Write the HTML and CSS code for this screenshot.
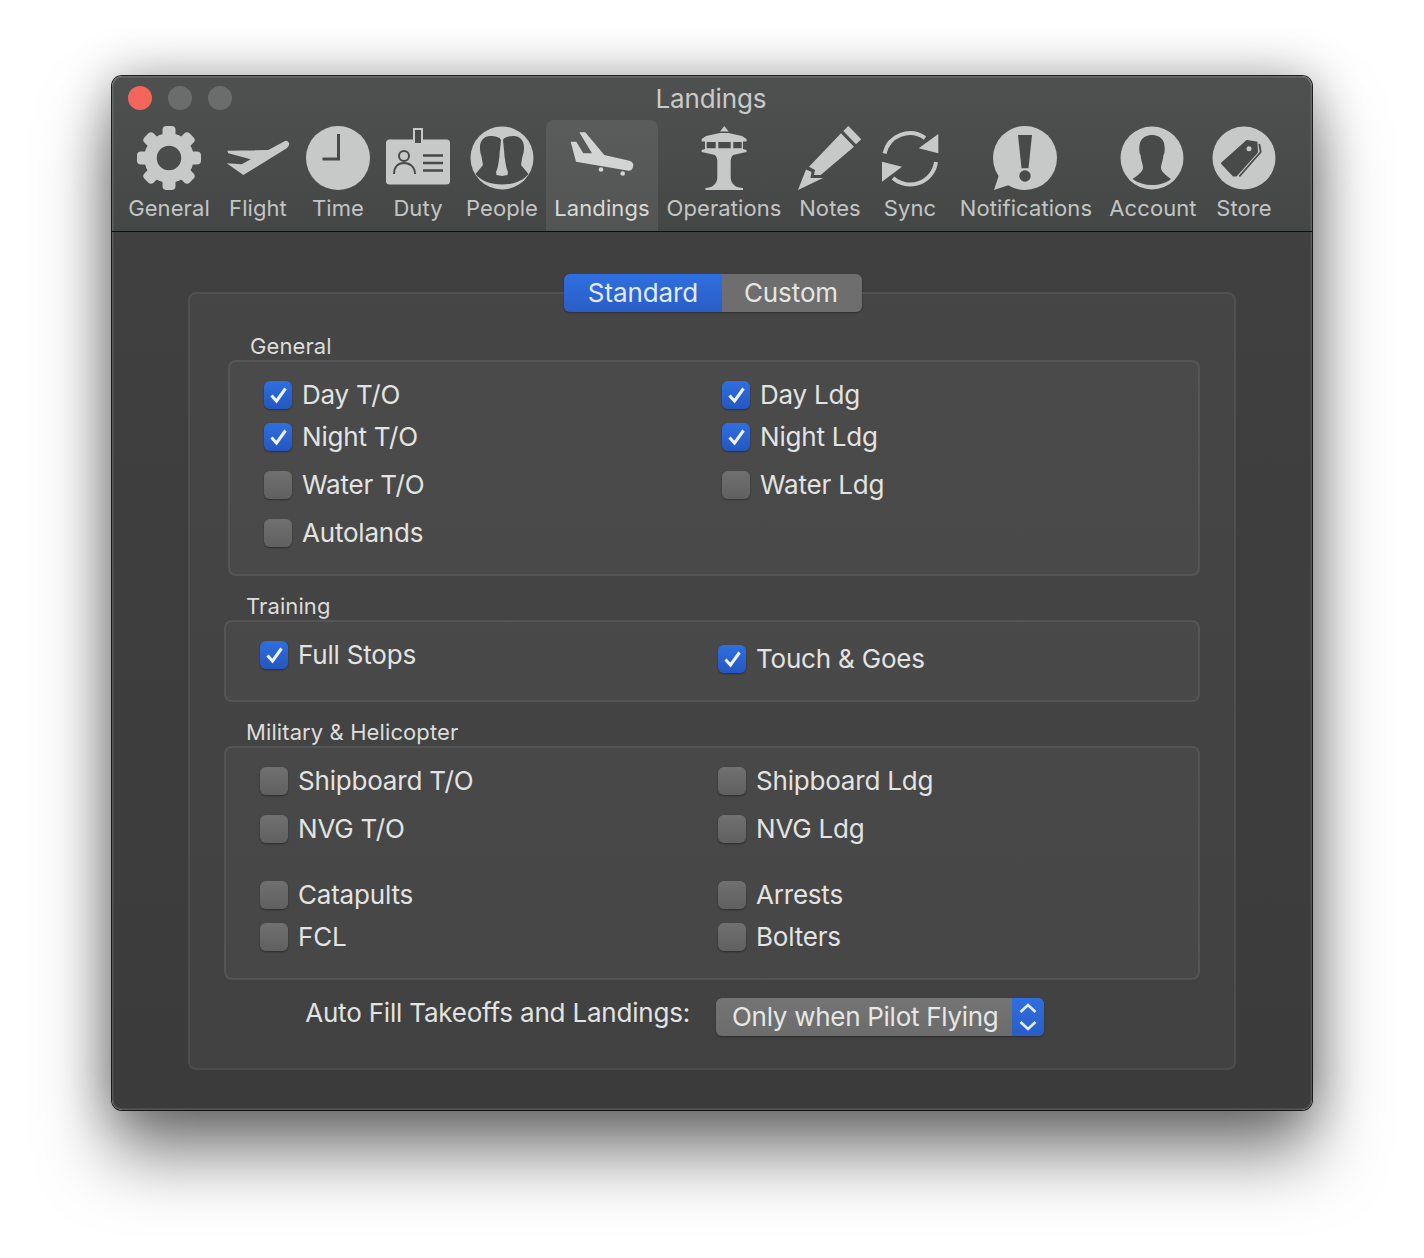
FILE: index.html
```html
<!DOCTYPE html>
<html lang="en">
<head>
<meta charset="utf-8">
<title>Landings</title>
<link rel="stylesheet" href="styles.css">
</head>
<body>
<svg class="defs" width="0" height="0" aria-hidden="true">
  <symbol id="check" viewBox="0 0 28 28"><path d="M7.500 14.500 12.500 20 21.500 7.500" fill="none" stroke="#edf2fc" stroke-width="3"/></symbol>
</svg>
<main class="window">
  <header class="chrome">
    <div class="titlebar">
      <div class="lights"><span class="light red"></span><span class="light"></span><span class="light"></span></div>
      <div class="title">Landings</div>
    </div>
    <nav class="toolbar">
      <div class="tool w98">
        <svg class="icon" viewBox="0 0 64 64"><g fill="#c7c9c8"><rect x="25.500" y="0" width="13" height="16" rx="4"/><rect x="25.500" y="0" width="13" height="16" rx="4" transform="rotate(45 32 32)"/><rect x="25.500" y="0" width="13" height="16" rx="4" transform="rotate(90 32 32)"/><rect x="25.500" y="0" width="13" height="16" rx="4" transform="rotate(135 32 32)"/><rect x="25.500" y="0" width="13" height="16" rx="4" transform="rotate(180 32 32)"/><rect x="25.500" y="0" width="13" height="16" rx="4" transform="rotate(225 32 32)"/><rect x="25.500" y="0" width="13" height="16" rx="4" transform="rotate(270 32 32)"/><rect x="25.500" y="0" width="13" height="16" rx="4" transform="rotate(315 32 32)"/></g><circle cx="32" cy="32" r="18.500" fill="none" stroke="#c7c9c8" stroke-width="12.500"/></svg>
        <span class="label">General</span>
      </div>
      <div class="tool w80">
        <svg class="icon" viewBox="0 0 64 64"><path fill="#c7c9c8" d="M1.300 24.700 42.300 24 59 15Q62 14 63.300 17.500 63.300 20.500 60.700 22.300L17.300 49 .7 37.300 15.700 38.300 24.700 33.300 2.300 27.300Z"/></svg>
        <span class="label">Flight</span>
      </div>
      <div class="tool w80">
        <svg class="icon" viewBox="0 0 64 64"><circle cx="32" cy="32" r="32" fill="#c7c9c8"/><path d="M32.500 8V33H16.500" fill="none" stroke="#484a49" stroke-width="3"/></svg>
        <span class="label">Time</span>
      </div>
      <div class="tool w80">
        <svg class="icon" viewBox="0 0 64 64"><rect x="0" y="13.500" width="64" height="45" rx="3.500" fill="#c7c9c8"/><rect x="28" y="3" width="8" height="15" fill="#484a49" stroke="#c7c9c8" stroke-width="2"/><g fill="none" stroke="#484a49" stroke-width="2"><circle cx="18" cy="30" r="5"/><path d="M8 48C8 41 12 37 18 37S29 41 29 48"/></g><path d="M37 29.500H57M37 37H57M37 44.500H57" stroke="#484a49" stroke-width="2.500"/></svg>
        <span class="label">Duty</span>
      </div>
      <div class="tool w88">
        <svg class="icon" viewBox="0 0 64 64"><circle cx="32" cy="32" r="31.500" fill="#c7c9c8"/><path fill="#484a49" d="M20.500 10C14 10 9.500 15 10 22.300 10 26 11 29 11.700 31 12 34 13 37 12.700 39.500L5.500 48C11 55 21 58.500 32 58.500 43 58.500 53 55 58.500 48L51.300 39.500C51 37 52 34 52.300 31 53 29 54 26 54 22.300 54.500 15 50 10 43.500 10 39 10 34 11 33 14 33.500 20 34.500 27 34.500 30L35.500 37 36.500 42 38 46 37.500 49 32 50 26.500 49 26 46 27.500 42 28.500 37 29.500 30C29.500 27 30.500 20 31 14 30 11 25 10 20.500 10Z"/></svg>
        <span class="label">People</span>
      </div>
      <div class="tool w112 active">
        <svg class="icon" viewBox="0 0 64 64"><path fill="#d3d5d4" d="M.7 15.700H6.300L13.300 27.300H22L9.300 6.300H15.300L34.300 29 59.300 34.700C63 36 63.500 38 63.300 39.500 63 43 61 44.700 58.700 44.700L6 35.700Z"/><circle cx="31" cy="43.500" r="2.300" fill="#d3d5d4"/><circle cx="52.700" cy="47.500" r="2.300" fill="#d3d5d4"/></svg>
        <span class="label">Landings</span>
      </div>
      <div class="tool w132">
        <svg class="icon" viewBox="0 0 64 64"><path fill="#c7c9c8" d="M32.300 0 36.700 5.500H28Z"/><path fill="#c7c9c8" d="M28 7H36.500L50 10 54.500 13V15.500H51V23L54.500 24V26L41 29Q39 31 38.700 34V52C39 58 44 62 51 62V64H13.500V62C20 62 25 58 25.300 52V34Q25 31 23 29L9.700 26V24L13 23V15.500H9.700V13L14 10Z"/><path fill="#484a49" d="M14.700 16H23.700V22.300H14.700ZM26.300 16H38.700V22.300H26.300ZM41.300 16H49.700V22.300H41.300Z"/></svg>
        <span class="label">Operations</span>
      </div>
      <div class="tool w80">
        <svg class="icon" viewBox="0 0 64 64"><g fill="#c7c9c8"><path d="M50.300 0 63.300 13.300 58 18.300 45.300 5Z"/><path d="M43 7.300 56 20.700 22.700 49H16L17 44 11 40.700Z"/><path d="M8 43.500 13.500 46 12.500 52H25L0 64Z"/></g></svg>
        <span class="label">Notes</span>
      </div>
      <div class="tool w80">
        <svg class="icon" viewBox="0 0 64 64"><path d="M6.500 27.500A26 26 0 0 1 47 12M58 36A26 26 0 0 1 15 52" fill="none" stroke="#c7c9c8" stroke-width="4"/><path fill="#c7c9c8" d="M60.300 8V27.300L40.700 22.300ZM4 35.700V55.700L24 40.700Z"/></svg>
        <span class="label">Sync</span>
      </div>
      <div class="tool w152">
        <svg class="icon" viewBox="1 0 64 64"><circle cx="32" cy="32" r="32" fill="#c7c9c8"/><path fill="#c7c9c8" d="M1 64 7 46 16 59Z"/><path fill="#484a49" d="M25 9H39L35.500 42.300H28.500Z"/><circle cx="32" cy="50" r="5.700" fill="#484a49"/></svg>
        <span class="label">Notifications</span>
      </div>
      <div class="tool w102">
        <svg class="icon" viewBox="1 0 64 64"><circle cx="32" cy="32" r="31.500" fill="#c7c9c8"/><path fill="#484a49" d="M32 9C24 9 19.300 14 19.300 22 19.300 25 19.500 28 20.500 29 21 34 22.500 37 23 41 23 45 21 47 12.500 53 18 57 25 59 32 59 39 59 46 57 51 53 43 47 41 45 41 41 41.500 37 43 34 43.500 29 44.500 28 44.700 25 44.700 22 44.700 14 40 9 32 9Z"/></svg>
        <span class="label">Account</span>
      </div>
      <div class="tool w80">
        <svg class="icon" viewBox="0 0 64 64"><circle cx="32" cy="32" r="31.500" fill="#c7c9c8"/><path fill="#484a49" stroke="#484a49" stroke-width="2" stroke-linejoin="round" d="M10 37.300 35 15 44.500 16.500 45 26 24 49.500H21.500Z"/><circle cx="37" cy="22.700" r="2.500" fill="#c7c9c8"/><path d="M47.300 18 48.700 26 27.300 50.500" fill="none" stroke="#484a49" stroke-width="1.800"/></svg>
        <span class="label">Store</span>
      </div>
    </nav>
  </header>

  <section class="panel">
    <div class="segments">
      <span class="segment on">Standard</span>
      <span class="segment off">Custom</span>
    </div>

    <div class="group">
      <div class="group-label">General</div>
      <div class="card">
        <div class="row">
          <label class="item"><span class="box on"><svg class="tick"><use href="#check"/></svg></span>Day T/O</label>
          <label class="item"><span class="box on"><svg class="tick"><use href="#check"/></svg></span>Day Ldg</label>
        </div>
        <div class="row near">
          <label class="item"><span class="box on"><svg class="tick"><use href="#check"/></svg></span>Night T/O</label>
          <label class="item"><span class="box on"><svg class="tick"><use href="#check"/></svg></span>Night Ldg</label>
        </div>
        <div class="row far">
          <label class="item"><span class="box"></span>Water T/O</label>
          <label class="item"><span class="box"></span>Water Ldg</label>
        </div>
        <div class="row far">
          <label class="item"><span class="box"></span>Autolands</label>
        </div>
      </div>
    </div>

    <div class="group wide">
      <div class="group-label">Training</div>
      <div class="card">
        <div class="row">
          <label class="item"><span class="box on"><svg class="tick"><use href="#check"/></svg></span>Full Stops</label>
          <label class="item lowered"><span class="box on"><svg class="tick"><use href="#check"/></svg></span>Touch &amp; Goes</label>
        </div>
      </div>
    </div>

    <div class="group wide">
      <div class="group-label">Military &amp; Helicopter</div>
      <div class="card">
        <div class="row">
          <label class="item"><span class="box"></span>Shipboard T/O</label>
          <label class="item"><span class="box"></span>Shipboard Ldg</label>
        </div>
        <div class="row far">
          <label class="item"><span class="box"></span>NVG T/O</label>
          <label class="item"><span class="box"></span>NVG Ldg</label>
        </div>
        <div class="row farther">
          <label class="item"><span class="box"></span>Catapults</label>
          <label class="item"><span class="box"></span>Arrests</label>
        </div>
        <div class="row near">
          <label class="item"><span class="box"></span>FCL</label>
          <label class="item"><span class="box"></span>Bolters</label>
        </div>
      </div>
    </div>

    <div class="autofill">
      <span class="autofill-label">Auto Fill Takeoffs and Landings:</span>
      <div class="select">
        <span class="select-text">Only when Pilot Flying</span>
        <span class="stepper"><svg class="chev" viewBox="0 0 32 38"><path d="M8.500 14 16 7 23.500 14M8.500 24 16 31 23.500 24" fill="none" stroke="#e3eafa" stroke-width="2.600"/></svg></span>
      </div>
    </div>
  </section>
</main>
</body>
</html>
```

FILE: styles.css
```css
* { box-sizing: border-box; }

html, body {
  margin: 0;
  height: 1258px;
  overflow: hidden;
  background: #fff;
}

body {
  padding: 76px 112px 0;
  font-family: Inter, "Noto Sans", sans-serif;
  color: #e2e3e2;
}

.defs { position: absolute; }

.window {
  width: 1200px;
  height: 1034px;
  border-radius: 10px;
  background: linear-gradient(#4f5150 0, #454746 155px, #3f403f 156px, #3a3b3a 100%);
  box-shadow:
    0 0 0 1px rgba(0, 0, 0, .85),
    inset 0 0 0 1.500px rgba(255, 255, 255, .14),
    0 44px 70px rgba(0, 0, 0, .5),
    0 0 50px rgba(0, 0, 0, .32);
}

.chrome { border-bottom: 1px solid #0d0d0d; height: 156px; }

.titlebar {
  height: 44px;
  display: grid;
  grid-template-columns: 1fr auto 1fr;
  align-items: center;
  padding: 0 16px;
}

.lights { grid-column: 1; grid-row: 1; display: flex; gap: 16px; }
.light { width: 24px; height: 24px; border-radius: 50%; background: #6b6d6c; }
.light.red { background: #f4665c; }

.title {
  grid-column: 2;
  grid-row: 1;
  margin: 2px 0 0 -2px;
  font-size: 26px;
  letter-spacing: -.12px;
  line-height: 30px;
  color: #c9cbca;
}

.toolbar { display: flex; height: 111px; padding-left: 8px; }

.tool {
  display: flex;
  flex-direction: column;
  align-items: center;
  padding-top: 6px;
  gap: 4px;
  border-radius: 8px 8px 0 0;
}
.tool.active { background: rgba(255, 255, 255, .08); }
.tool.active .label { color: #d8dad9; }

.w80 { width: 80px; }
.w88 { width: 88px; }
.w98 { width: 98px; }
.w102 { width: 102px; }
.w112 { width: 112px; }
.w132 { width: 132px; }
.w152 { width: 152px; }

.icon { width: 64px; height: 64px; flex: none; overflow: visible; }

.label {
  font-size: 22px;
  line-height: 28px;
  letter-spacing: .08px;
  color: #c3c5c4;
  white-space: nowrap;
}

.panel {
  margin: 60px 76px 0;
  height: 778px;
  padding: 0 34px 32px 38px;
  border: 2px solid rgba(255, 255, 255, .065);
  border-radius: 8px;
  background: rgba(255, 255, 255, .03);
}

.segments {
  display: flex;
  width: 298px;
  height: 38px;
  margin: -20px 0 20px 336px;
  border-radius: 6px;
  overflow: hidden;
  box-shadow: 0 1px 2px rgba(0, 0, 0, .35);
  font-size: 26px;
  line-height: 38px;
  letter-spacing: -.1px;
  text-align: center;
}
.segment.on { width: 158px; background: linear-gradient(#2f6fe0, #2a5dc6); color: #e2eafb; }
.segment.off { width: 140px; padding-right: 2px; background: #6d6e6d; color: #e4e5e4; }

.group + .group { margin-top: 16px; }
.group.wide { margin-left: -4px; }

.group-label {
  padding-left: 22px;
  font-size: 22px;
  line-height: 28px;
  letter-spacing: .1px;
  color: #dcdddc;
}

.card {
  padding: 19px 0 27px 34px;
  border: 2px solid rgba(255, 255, 255, .065);
  border-radius: 8px;
  background: rgba(255, 255, 255, .03);
}

.row {
  display: grid;
  grid-template-columns: 458px 1fr;
  min-height: 28px;
}
.row.near { margin-top: 14px; }
.row.far { margin-top: 20px; }
.row.farther { margin-top: 38px; }

.item {
  display: flex;
  align-items: flex-start;
  gap: 10px;
  height: 28px;
  font-size: 26px;
  line-height: 28px;
  letter-spacing: -.2px;
  white-space: nowrap;
}
.item.lowered { margin-top: 4px; }

.box {
  flex: none;
  width: 28px;
  height: 28px;
  border-radius: 6px;
  background: linear-gradient(#6f706f, #5f605f);
  box-shadow: 0 1px 2px rgba(0, 0, 0, .4);
}
.box.on { background: linear-gradient(#2f6fe0, #2556bf); }
.tick { display: block; width: 28px; height: 28px; }

.autofill {
  display: flex;
  align-items: flex-start;
  gap: 26px;
  margin-top: 18px;
  font-size: 26px;
  letter-spacing: -.2px;
}
.autofill-label { width: 462px; text-align: right; line-height: 30px; white-space: nowrap; }

.select {
  display: flex;
  width: 328px;
  height: 38px;
  border-radius: 6px;
  overflow: hidden;
  background: linear-gradient(#737473, #6b6c6b);
  box-shadow: 0 1px 2px rgba(0, 0, 0, .35);
}
.select-text { flex: 1; padding-left: 16px; line-height: 38px; letter-spacing: -.28px; white-space: nowrap; color: #e6e7e6; }
.stepper { flex: none; width: 32px; height: 38px; background: linear-gradient(#2f6fe0, #2a5dc6); }
.chev { display: block; width: 32px; height: 38px; }
```
